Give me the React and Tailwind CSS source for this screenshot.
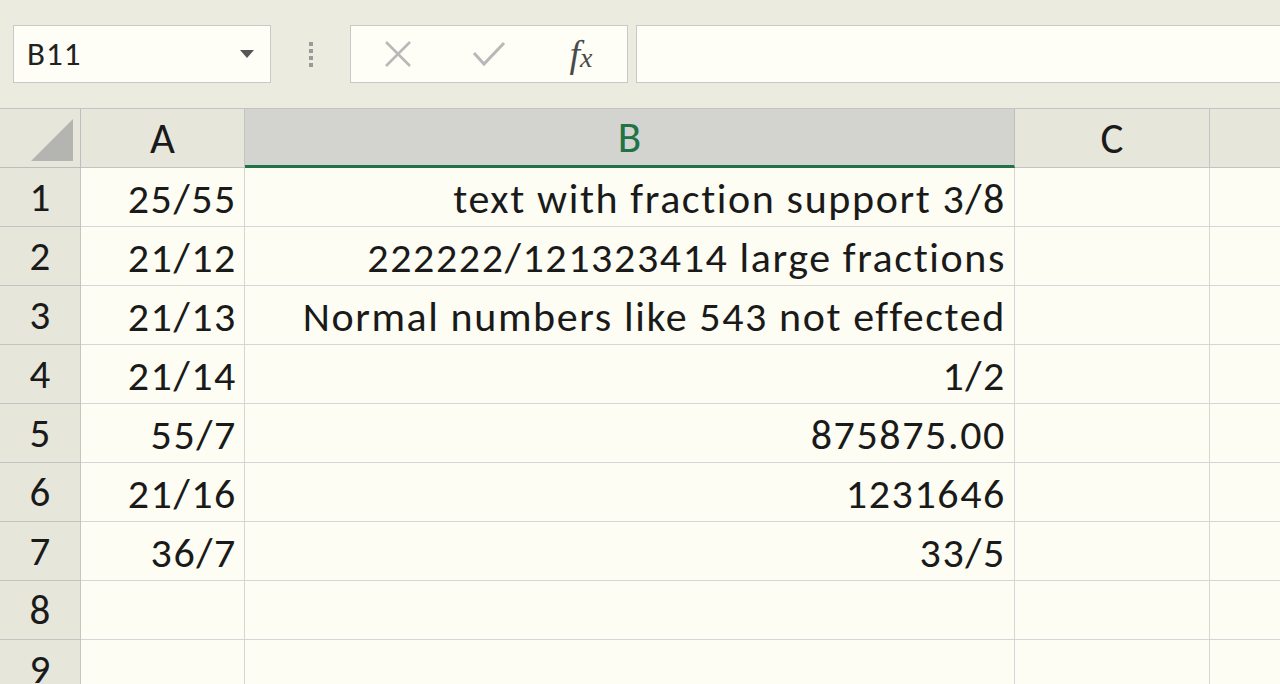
import React from "react";

const rows = [
  ["25/55", "text with fraction support 3/8"],
  ["21/12", "222222/121323414 large fractions"],
  ["21/13", "Normal numbers like 543 not effected"],
  ["21/14", "1/2"],
  ["55/7", "875875.00"],
  ["21/16", "1231646"],
  ["36/7", "33/5"],
  ["", ""],
  ["", ""],
];

const font = { fontFamily: "Carlito, Lato, 'Open Sans', sans-serif" };

function Toolbar() {
  return (
    <div className="h-[108px] bg-[#ebebdf] flex items-start pt-[25px] pl-[13px]">
      {/* name box */}
      <div className="w-[258px] h-[58px] bg-[#fefef6] border border-[#c8c8c8] flex items-center justify-between pl-[13px] pr-[16px]">
        <span className="text-[33px] tracking-[1px] text-[#222] pt-[2px]" style={font}>B11</span>
        <svg width="14" height="8" viewBox="0 0 14 8">
          <path d="M0 0 L14 0 L7 8 Z" fill="#555" />
        </svg>
      </div>
      {/* grip */}
      <div className="w-[79px] h-[58px] flex flex-col items-center justify-center gap-[3px]">
        <div className="w-[4px] h-[4px] bg-[#9a9a9a]" />
        <div className="w-[4px] h-[4px] bg-[#9a9a9a]" />
        <div className="w-[4px] h-[4px] bg-[#9a9a9a]" />
        <div className="w-[4px] h-[4px] bg-[#9a9a9a]" />
      </div>
      {/* buttons */}
      <div className="w-[278px] h-[58px] bg-[#fefef6] border border-[#c8c8c8] flex items-center">
        <div className="w-[92px] flex justify-center pl-[2px]">
          <svg width="30" height="30" viewBox="0 0 30 30">
            <path d="M3 3 L27 27 M27 3 L3 27" stroke="#b8b8b8" strokeWidth="2.5" />
          </svg>
        </div>
        <div className="w-[92px] flex justify-center">
          <svg width="34" height="28" viewBox="0 0 34 28">
            <path d="M2 13 L12 24 L32 3" stroke="#b8b8b8" strokeWidth="3" fill="none" />
          </svg>
        </div>
        <div className="w-[92px] flex justify-center">
          <span className="text-[38px] italic text-[#4a4a4a] leading-none" style={{ fontFamily: "'Liberation Serif', serif" }}>
            f<span className="text-[28px]">x</span>
          </span>
        </div>
      </div>
      <div className="w-[8px]" />
      {/* formula bar */}
      <div className="flex-1 h-[58px] bg-[#fefef6] border border-r-0 border-[#c8c8c8]" />
    </div>
  );
}

export default function App() {
  return (
    <div className="w-[1280px] h-[684px] overflow-hidden bg-[#ebebdf] text-[#1a1a1a]" style={font}>
      <Toolbar />
      <div className="grid grid-cols-[81px_164px_770px_195px_70px] auto-rows-[59px] border-t border-[#c4c4c4]">
        {/* header row */}
        <div className="relative bg-[#e6e6da] border-r border-b border-[#bdbdbd]">
          <svg className="absolute right-[7px] bottom-[6px]" width="42" height="42" viewBox="0 0 42 42">
            <path d="M42 0 L42 42 L0 42 Z" fill="#b4b4b0" />
          </svg>
        </div>
        <div className="bg-[#e6e6da] border-r border-b border-[#c4c4c4] flex items-center justify-center text-[43px] pt-[2px]">A</div>
        <div className="bg-[#d3d3d0] border-r border-[#bdbdbd] border-b-[3px] border-b-[#217346] flex items-center justify-center text-[43px] text-[#217346] pt-[3px]">B</div>
        <div className="bg-[#e6e6da] border-r border-b border-[#c4c4c4] flex items-center justify-center text-[43px] pt-[2px]">C</div>
        <div className="bg-[#e6e6da] border-b border-[#c4c4c4]" />

        {rows.map((r, i) => (
          <React.Fragment key={i}>
            <div className="bg-[#e6e6da] border-r border-b border-[#c4c4c4] flex items-center justify-center text-[41px] pt-[2px]">
              {i + 1}
            </div>
            <div className="bg-[#fdfdf3] border-r border-b border-[#d6d6d6] flex items-center justify-end pr-[7px] text-[42px] tracking-[1.6px] whitespace-nowrap pt-[2px]">
              {r[0]}
            </div>
            <div className="bg-[#fdfdf3] border-r border-b border-[#d6d6d6] flex items-center justify-end pr-[8px] text-[42px] tracking-[1.6px] whitespace-nowrap pt-[2px]">
              {r[1]}
            </div>
            <div className="bg-[#fdfdf3] border-r border-b border-[#d6d6d6]" />
            <div className="bg-[#fdfdf3] border-b border-[#d6d6d6]" />
          </React.Fragment>
        ))}
      </div>
    </div>
  );
}
